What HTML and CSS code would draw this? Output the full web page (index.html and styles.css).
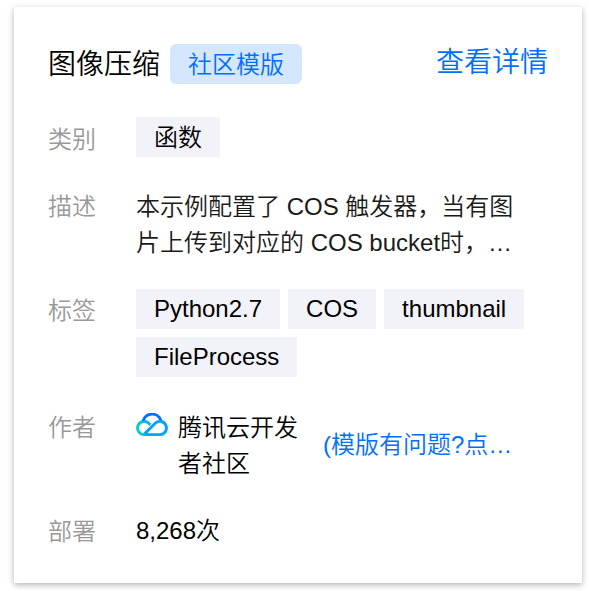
FILE: index.html
```html
<!DOCTYPE html>
<html lang="zh-CN">
<head>
<meta charset="utf-8">
<title>图像压缩</title>
<link rel="stylesheet" href="styles.css">
</head>
<body>
<article class="card">
  <header class="card-header">
    <h2 class="title">图像压缩</h2>
    <span class="badge">社区模版</span>
    <a class="detail-link">查看详情</a>
  </header>
  <dl class="fields">
    <div class="row row-category">
      <dt>类别</dt>
      <dd class="tags"><span class="tag tag-category">函数</span></dd>
    </div>
    <div class="row row-description">
      <dt>描述</dt>
      <dd class="description">本示例配置了 COS 触发器，当有图<br>片上传到对应的 COS bucket时，…</dd>
    </div>
    <div class="row row-tags">
      <dt>标签</dt>
      <dd class="tags">
        <span class="tag">Python2.7</span>
        <span class="tag">COS</span>
        <span class="tag">thumbnail</span>
        <span class="tag">FileProcess</span>
      </dd>
    </div>
    <div class="row row-author">
      <dt>作者</dt>
      <dd class="author">
        <svg class="logo" viewBox="0 0 32 24" fill="none" stroke-width="2.9">
          <defs>
            <linearGradient id="left" x1="0" y1="0" x2="1" y2="0">
              <stop offset="0" stop-color="#00d2c8"/>
              <stop offset="1" stop-color="#00b4f0"/>
            </linearGradient>
          </defs>
          <path d="M10.5 21.6H8.2A6.6 6.6 0 1 1 12.8 10.3L14.4 11.9" stroke="url(#left)"/>
          <path d="M7.2 7.8A9.2 9.2 0 0 1 24.8 7.4" stroke="#006eff"/>
          <path d="M10 21.6H23.9A6.6 6.6 0 1 0 19.2 10.3L8.6 20.9" stroke="#00a4ff"/>
        </svg>
        <span class="author-name">腾讯云开发者社区</span>
        <a class="feedback">(模版有问题?点…</a>
      </dd>
    </div>
    <div class="row row-deploy">
      <dt>部署</dt>
      <dd>8,268次</dd>
    </div>
  </dl>
</article>
</body>
</html>
```
FILE: styles.css
```css
* {
  box-sizing: border-box;
}

body {
  min-height: 591px;
  margin: 0;
  padding: 7px 0 0 14px;
  background: #fff;
  color: #000;
  font: 24px/36px "Liberation Sans", "Noto Sans CJK SC", sans-serif;
  font-weight: 350;
}

.card {
  width: 568px;
  height: 576px;
  padding: 34px;
  background: #fff;
  box-shadow: 0 2px 6px rgba(0, 0, 0, 0.3);
}

.card-header {
  display: flex;
  align-items: center;
  height: 46px;
}

.title {
  margin: 2px 0 0;
  font-size: 28px;
  font-weight: inherit;
  line-height: 40px;
}

.badge {
  height: 40px;
  margin-left: 10px;
  padding: 0 18px;
  border-radius: 6px;
  background: #d5e7ff;
  color: #006eff;
  line-height: 41px;
}

.detail-link {
  margin: -2px 0 0 auto;
  color: #006eff;
  font-size: 28px;
  line-height: 40px;
}

.fields {
  margin: 0;
}

.row {
  display: flex;
}

.row dt {
  flex: 0 0 88px;
  color: #999;
}

.row dd {
  flex: 1;
  margin: 0;
}

.row-category {
  height: 40px;
  margin-top: 30px;
}

.row-category dt {
  padding-top: 5px;
}

.row-description {
  margin-top: 32px;
}

.row-description .description {
  color: #1a1a1a;
  white-space: nowrap;
}

.row-tags {
  margin-top: 28px;
}

.row-tags dt {
  padding-top: 4px;
}

.row-author,
.row-deploy {
  margin-top: 32px;
}

.tags {
  display: flex;
  flex-wrap: wrap;
  gap: 8px;
}

.tag {
  height: 40px;
  padding: 0 18px;
  background: #f2f3f8;
  line-height: 40px;
}

.tag-category {
  line-height: 42px;
}

.author {
  display: flex;
}

.logo {
  flex: none;
  width: 32px;
  height: 24px;
  margin: 4px 10px 0 0;
}

.author-name {
  width: 120px;
  padding-top: 1px;
  margin-bottom: -1px;
}

.row-author dt {
  padding-top: 1px;
}

.row-deploy dt {
  padding-top: 1px;
}

.feedback {
  align-self: center;
  margin-left: 25px;
  color: #006eff;
  white-space: nowrap;
}
```
